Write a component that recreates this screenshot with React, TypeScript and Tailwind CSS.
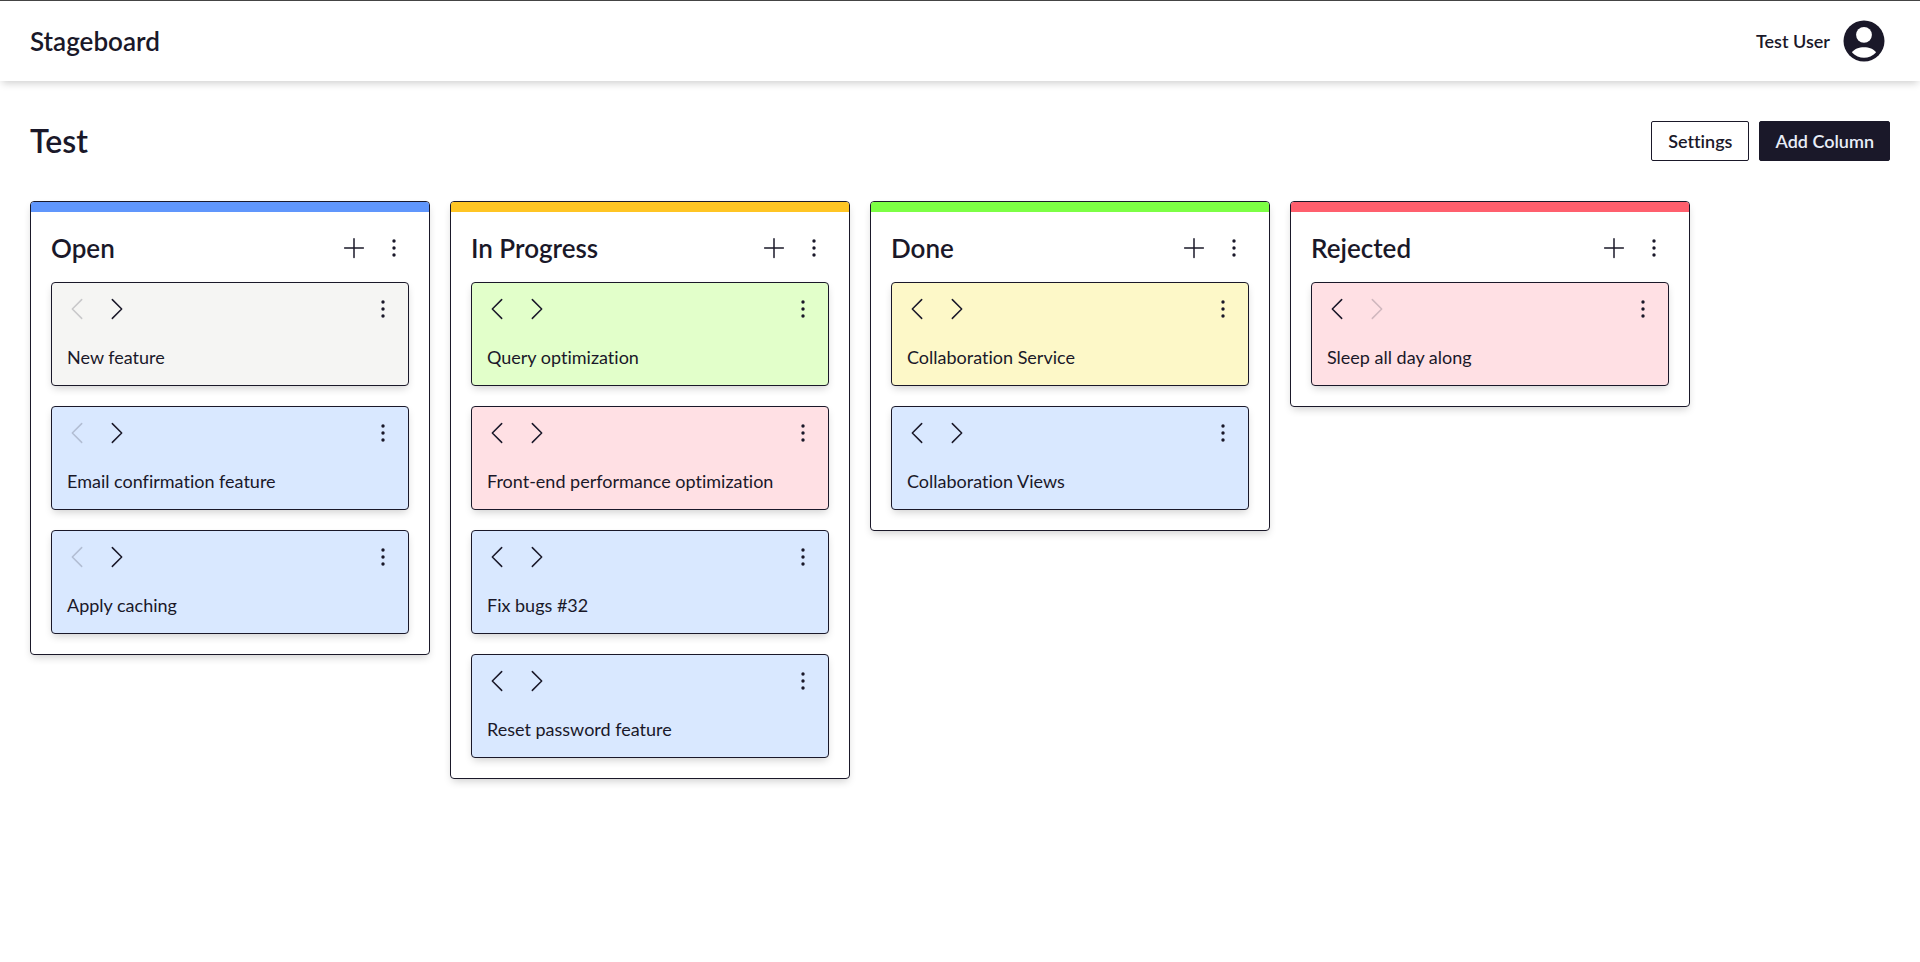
type Tone = "gray" | "blue" | "green" | "red" | "yellow";

interface Task {
  title: string;
  tone: Tone;
}

interface Column {
  title: string;
  bar: string;
  tasks: Task[];
}

const toneClass: Record<Tone, string> = {
  gray: "bg-[#f5f5f3]",
  blue: "bg-[#d9e8ff]",
  green: "bg-[#e2ffca]",
  red: "bg-[#ffe0e4]",
  yellow: "bg-[#fdf8c8]",
};

const columns: Column[] = [
  {
    title: "Open",
    bar: "bg-[#6096fc]",
    tasks: [
      { title: "New feature", tone: "gray" },
      { title: "Email confirmation feature", tone: "blue" },
      { title: "Apply caching", tone: "blue" },
    ],
  },
  {
    title: "In Progress",
    bar: "bg-[#ffc524]",
    tasks: [
      { title: "Query optimization", tone: "green" },
      { title: "Front-end performance optimization", tone: "red" },
      { title: "Fix bugs #32", tone: "blue" },
      { title: "Reset password feature", tone: "blue" },
    ],
  },
  {
    title: "Done",
    bar: "bg-[#7dff45]",
    tasks: [
      { title: "Collaboration Service", tone: "yellow" },
      { title: "Collaboration Views", tone: "blue" },
    ],
  },
  {
    title: "Rejected",
    bar: "bg-[#ff5f6d]",
    tasks: [{ title: "Sleep all day along", tone: "red" }],
  },
];

function StrokeIcon({ d }: { d: string }) {
  return (
    <svg
      viewBox="0 0 24 24"
      className="size-[30px]"
      fill="none"
      stroke="currentColor"
      strokeWidth={1.2}
      strokeLinecap="round"
      strokeLinejoin="round"
      aria-hidden="true"
    >
      <path d={d} />
    </svg>
  );
}

function DotsIcon() {
  return (
    <svg viewBox="0 0 30 30" className="size-[30px]" fill="currentColor" aria-hidden="true">
      <circle cx="15" cy="8" r="1.7" />
      <circle cx="15" cy="15" r="1.7" />
      <circle cx="15" cy="22" r="1.7" />
    </svg>
  );
}

function AvatarIcon() {
  return (
    <svg viewBox="0 0 50 50" className="size-[50px]" aria-hidden="true">
      <circle cx="24" cy="25" r="20.5" fill="currentColor" />
      <circle cx="24" cy="18.8" r="7.9" fill="#fff" />
      <path d="M12 36.4C16 29.4 32 29.4 36 36.4C29.5 43.6 18.5 43.6 12 36.4Z" fill="#fff" />
    </svg>
  );
}

function TaskCard({ task, first, last }: { task: Task; first: boolean; last: boolean }) {
  return (
    <li
      className={`rounded border border-[#1a1829] shadow-[0_4px_8px_-2px_rgba(0,0,0,0.2)] ${toneClass[task.tone]}`}
    >
      <div className="flex items-center gap-2.5 px-2.5 pt-[11px]">
        <button type="button" aria-label="Move left" disabled={first} className="disabled:opacity-20">
          <StrokeIcon d="M15.75 19.5 8.25 12l7.5-7.5" />
        </button>
        <button type="button" aria-label="Move right" disabled={last} className="disabled:opacity-20">
          <StrokeIcon d="m8.25 4.5 7.5 7.5-7.5 7.5" />
        </button>
        <button type="button" aria-label="Task menu" className="ml-auto">
          <DotsIcon />
        </button>
      </div>
      <p className="px-[15px] pt-[21px] pb-[15px] text-lg leading-[25px]">{task.title}</p>
    </li>
  );
}

export default function App() {
  return (
    <div className="bg-white font-['Lato',sans-serif] text-[#1a1829] [font-variant-ligatures:none]">
      <header className="flex items-center justify-between border-t border-[#444] px-[30px] py-[15px] shadow-[0_4px_8px_-2px_rgba(0,0,0,0.2)]">
        <a href="#" className="text-[26px] leading-[30px] font-semibold">
          Stageboard
        </a>
        <a href="#" className="flex items-center gap-2.5 text-lg font-semibold">
          Test User
          <AvatarIcon />
        </a>
      </header>

      <main className="px-[30px] py-10">
        <div className="flex items-center justify-between">
          <h1 className="text-[32px] leading-10 font-semibold">Test</h1>
          <div className="flex gap-2.5 text-lg font-semibold">
            <button type="button" className="h-10 rounded-xs border border-[#1a1829] px-4">
              Settings
            </button>
            <button
              type="button"
              className="h-10 rounded-xs border border-[#1a1829] bg-[#1a1829] px-[15px] text-[#e9eef8]"
            >
              Add Column
            </button>
          </div>
        </div>

        <div className="mt-10 flex items-start gap-5">
          {columns.map((column, index) => (
            <section
              key={column.title}
              className="w-[400px] shrink-0 overflow-hidden rounded border border-[#1a1829] shadow-[0_4px_8px_-2px_rgba(0,0,0,0.2)]"
            >
              <div className={`h-2.5 ${column.bar}`} />
              <div className="p-5">
                <div className="flex h-8 items-center gap-2.5">
                  <h2 className="mr-auto text-[26px] leading-8 font-semibold">{column.title}</h2>
                  <button type="button" aria-label="Add task">
                    <StrokeIcon d="M12 4.5v15m7.5-7.5h-15" />
                  </button>
                  <button type="button" aria-label="Column menu">
                    <DotsIcon />
                  </button>
                </div>
                <ul className="mt-[18px] flex flex-col gap-5">
                  {column.tasks.map((task) => (
                    <TaskCard
                      key={task.title}
                      task={task}
                      first={index === 0}
                      last={index === columns.length - 1}
                    />
                  ))}
                </ul>
              </div>
            </section>
          ))}
        </div>
      </main>
    </div>
  );
}
